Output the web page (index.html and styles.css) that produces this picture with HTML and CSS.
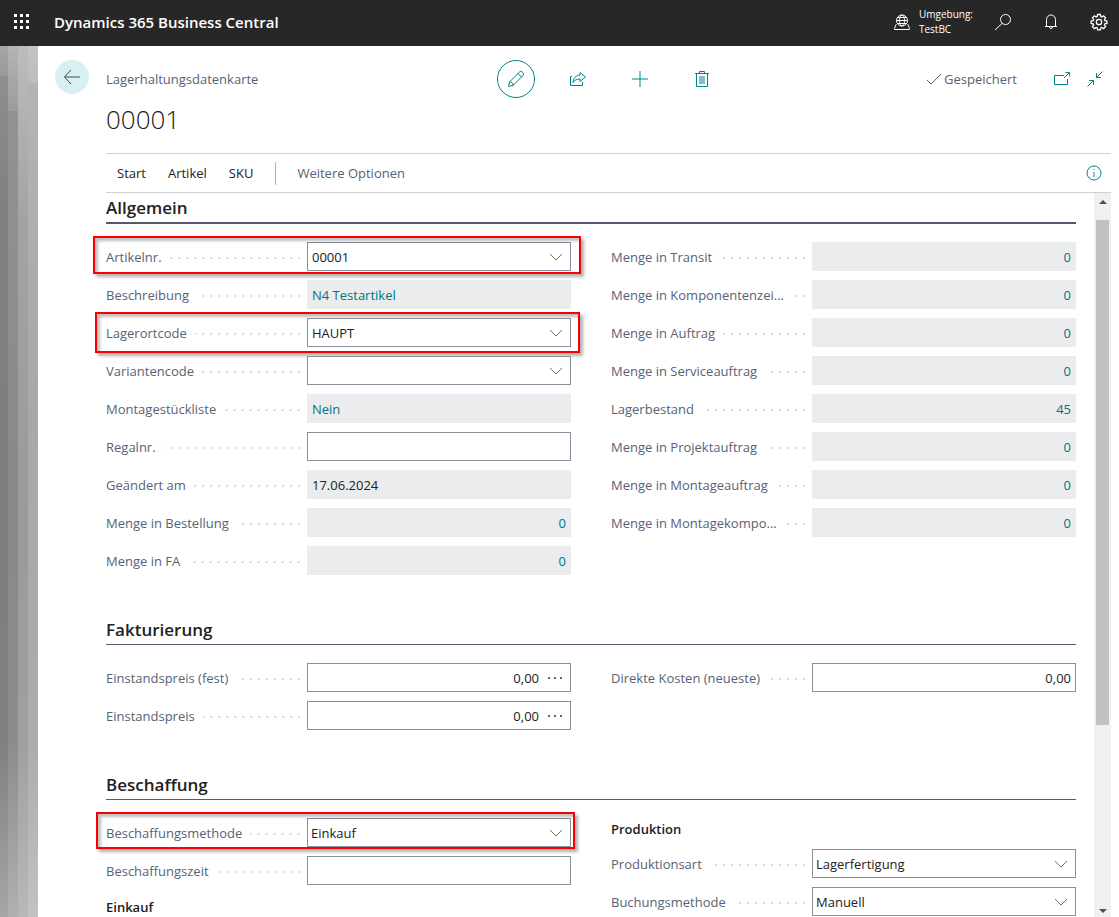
FILE: index.html
```html
<!DOCTYPE html>
<html lang="de">
<head>
<meta charset="utf-8">
<meta name="viewport" content="width=device-width, initial-scale=1">
<title>Lagerhaltungsdatenkarte - 00001</title>
<link rel="stylesheet" href="styles.css">
</head>
<body>
<svg class="sprite" aria-hidden="true">
  <symbol id="chevron" viewBox="0 0 14 8"><path d="M1 1l6 6 6-6"/></symbol>
  <symbol id="more" viewBox="0 0 16 4"><circle cx="2" cy="2" r="1"/><circle cx="8" cy="2" r="1"/><circle cx="14" cy="2" r="1"/></symbol>
</svg>

<header class="topbar">
  <button class="icon-btn" aria-label="App-Startfeld">
    <svg class="waffle" width="16" height="16" viewBox="0 0 16 16"><path d="M0 0h3v3H0zM6 0h3v3H6zM12 0h3v3h-3zM0 6h3v3H0zM6 6h3v3H6zM12 6h3v3h-3zM0 12h3v3H0zM6 12h3v3H6zM12 12h3v3h-3z"/></svg>
  </button>
  <a class="brand" href="#">Dynamics 365 Business Central</a>
  <div class="env">
    <svg width="16" height="16" viewBox="0 0 16 16"><circle cx="8" cy="6.500" r="5.500"/><ellipse cx="8" cy="6.500" rx="2.500" ry="5.500"/><path d="M2.500 6.500h11M3.500 3.500h9M3.500 9.500h9M2.500 10.500H2L.5 14.500v1h15v-1L14 10.500h-.5"/></svg>
    <span>Umgebung:<br>TestBC</span>
  </div>
  <button class="icon-btn" aria-label="Suchen"><svg width="18" height="18" viewBox="0 0 18 18"><circle cx="11.500" cy="6.500" r="5"/><path d="M8 10.500L1 17"/></svg></button>
  <button class="icon-btn" aria-label="Benachrichtigungen"><svg width="16" height="18" viewBox="0 0 16 18"><path d="M2 13.500h12M3.500 13.500V6.500a4.500 4.500 0 0 1 9 0v7M6.500 14a1.500 1.500 0 0 0 3 0"/></svg></button>
  <button class="icon-btn" aria-label="Einstellungen"><svg class="gear" width="18" height="18" viewBox="0 0 18 18"><path d="M7.600 1.500h2.800l.4 2 1.100.5 1.700-1.200 2 2-1.200 1.700.5 1.100 2 .4v2.400l-2 .4-.5 1.100 1.200 1.700-2 2-1.700-1.200-1.100.5-.4 2H7.600l-.4-2-1.100-.5-1.700 1.200-2-2 1.200-1.700-.5-1.100-2-.4V8l2-.4.5-1.100-1.200-1.700 2-2L6.100 4l1.100-.5z"/><circle cx="9" cy="9" r="2.700"/></svg></button>
</header>

<div class="stage">
  <div class="rail" aria-hidden="true"><i></i><i></i><i></i><i></i></div>
  <main class="page">
    <div class="page-head">
      <button class="back" aria-label="Zurück"><svg width="18" height="16" viewBox="0 0 18 16"><path d="M17 8H1.500M8 1L1.500 8 8 15"/></svg></button>
      <div class="caption">Lagerhaltungsdatenkarte</div>
      <div class="tools">
        <button class="tool ring" aria-label="Bearbeiten"><svg width="18" height="18" viewBox="0 0 18 18"><path d="M1.500 16.500l1.200-4.700L12.500 2a1.800 1.800 0 0 1 2.700 0l.8.800a1.800 1.800 0 0 1 0 2.700L6.200 15.300zM2.700 11.800c1.900 0 3.500 1.600 3.500 3.500M11 3.500L14.500 7"/></svg></button>
        <button class="tool" aria-label="Teilen"><svg width="18" height="16" viewBox="0 0 18 16"><path d="M3 5.500H1.500v9h12V11M11 1.500L16.500 6 11 10.500V8C8 8 5.500 9 4 11.500 4.300 7 7 4.300 11 4.200z"/></svg></button>
        <button class="tool" aria-label="Neu"><svg width="18" height="18" viewBox="0 0 18 18"><path d="M9 1v16M1 9h16"/></svg></button>
        <button class="tool" aria-label="Löschen"><svg width="16" height="18" viewBox="0 0 16 18"><path d="M1 3.500h14M5.500 3.500v-2h5v2M2.500 3.500v13h11v-13"/><path class="fill" d="M5 6h6v8H5z"/></svg></button>
      </div>
      <div class="status">
        <span class="saved"><svg width="16" height="12" viewBox="0 0 16 12"><path d="M1 7l4 4L15 1"/></svg>Gespeichert</span>
        <button class="mini" aria-label="In neuem Fenster öffnen"><svg width="16" height="14" viewBox="0 0 16 14"><path d="M10 3.500H.5v9h13V7M10 6l5-5M11.500.5h4v4"/></svg></button>
        <button class="mini" aria-label="Verkleinern"><svg width="16" height="16" viewBox="0 0 16 16"><path d="M.5 15.500L6.500 9.500M2 9.500h4.500V14M15.500.5l-6 6M9.500 2v4.500H14"/></svg></button>
      </div>
    </div>
    <h1>00001</h1>
    <nav class="actions">
      <button>Start</button><button>Artikel</button><button>SKU</button>
      <button class="extra">Weitere Optionen</button>
      <button class="info" aria-label="Infobox"><svg width="16" height="16" viewBox="0 0 16 16"><circle cx="8" cy="8" r="7"/><path d="M8 7v5M8 4v1"/></svg></button>
    </nav>

    <div class="body">
      <div class="content">
        <section>
          <h2>Allgemein</h2>
          <div class="cols">
            <div class="col">
              <div class="row mark mark-a"><label for="f1">Artikelnr.</label><div class="box"><input id="f1" value="00001"><button aria-label="Artikelnr. auswählen"><svg class="chev"><use href="#chevron"/></svg></button></div></div>
              <div class="row"><label for="f2">Beschreibung</label><div class="box ro"><input id="f2" value="N4 Testartikel" readonly></div></div>
              <div class="row mark mark-b"><label for="f3">Lagerortcode</label><div class="box"><input id="f3" value="HAUPT"><button aria-label="Lagerortcode auswählen"><svg class="chev"><use href="#chevron"/></svg></button></div></div>
              <div class="row"><label for="f4">Variantencode</label><div class="box"><input id="f4"><button aria-label="Variantencode auswählen"><svg class="chev"><use href="#chevron"/></svg></button></div></div>
              <div class="row"><label for="f5">Montagestückliste</label><div class="box ro"><input id="f5" value="Nein" readonly></div></div>
              <div class="row"><label for="f6">Regalnr.</label><div class="box"><input id="f6"></div></div>
              <div class="row"><label for="f7">Geändert am</label><div class="box ro plain"><input id="f7" value="17.06.2024" readonly></div></div>
              <div class="row"><label for="f8">Menge in Bestellung</label><div class="box ro num"><input id="f8" value="0" readonly></div></div>
              <div class="row"><label for="f9">Menge in FA</label><div class="box ro num"><input id="f9" value="0" readonly></div></div>
            </div>
            <div class="col">
              <div class="row"><label for="g1">Menge in Transit</label><div class="box ro num"><input id="g1" value="0" readonly></div></div>
              <div class="row"><label for="g2">Menge in Komponentenzei...</label><div class="box ro num"><input id="g2" value="0" readonly></div></div>
              <div class="row"><label for="g3">Menge in Auftrag</label><div class="box ro num"><input id="g3" value="0" readonly></div></div>
              <div class="row"><label for="g4">Menge in Serviceauftrag</label><div class="box ro num"><input id="g4" value="0" readonly></div></div>
              <div class="row"><label for="g5">Lagerbestand</label><div class="box ro num"><input id="g5" value="45" readonly></div></div>
              <div class="row"><label for="g6">Menge in Projektauftrag</label><div class="box ro num"><input id="g6" value="0" readonly></div></div>
              <div class="row"><label for="g7">Menge in Montageauftrag</label><div class="box ro num"><input id="g7" value="0" readonly></div></div>
              <div class="row"><label for="g8">Menge in Montagekompo...</label><div class="box ro num"><input id="g8" value="0" readonly></div></div>
            </div>
          </div>
        </section>

        <section>
          <h2>Fakturierung</h2>
          <div class="cols">
            <div class="col">
              <div class="row"><label for="h1">Einstandspreis (fest)</label><div class="box num"><input id="h1" value="0,00"><button aria-label="Einstandspreis (fest) bearbeiten"><svg class="dots"><use href="#more"/></svg></button></div></div>
              <div class="row"><label for="h2">Einstandspreis</label><div class="box num"><input id="h2" value="0,00"><button aria-label="Einstandspreis bearbeiten"><svg class="dots"><use href="#more"/></svg></button></div></div>
            </div>
            <div class="col">
              <div class="row"><label for="h3">Direkte Kosten (neueste)</label><div class="box num"><input id="h3" value="0,00"></div></div>
            </div>
          </div>
        </section>

        <section>
          <h2>Beschaffung</h2>
          <div class="cols">
            <div class="col">
              <div class="row mark mark-c"><label for="k1">Beschaffungsmethode</label><div class="box pick"><select id="k1"><option>Einkauf</option></select><svg class="chev"><use href="#chevron"/></svg></div></div>
              <div class="row"><label for="k2">Beschaffungszeit</label><div class="box"><input id="k2"></div></div>
              <h3>Einkauf</h3>
            </div>
            <div class="col">
              <h3>Produktion</h3>
              <div class="row"><label for="k3">Produktionsart</label><div class="box pick"><select id="k3"><option>Lagerfertigung</option></select><svg class="chev"><use href="#chevron"/></svg></div></div>
              <div class="row"><label for="k4">Buchungsmethode</label><div class="box pick"><select id="k4"><option>Manuell</option></select><svg class="chev"><use href="#chevron"/></svg></div></div>
            </div>
          </div>
        </section>
      </div>
      <div class="scrollbar" aria-hidden="true">
        <svg width="8" height="4" viewBox="0 0 8 4"><path d="M4 0l4 4H0z"/></svg>
        <div class="track"><div class="thumb"></div></div>
        <svg width="8" height="4" viewBox="0 0 8 4"><path d="M4 4l4-4H0z"/></svg>
      </div>
    </div>
  </main>
</div>
</body>
</html>
```
FILE: styles.css
```css
:root {
  --teal: #00838a;
  --label: #586275;
  --ink: #212121;
  --line: #8a909c;
}

* { box-sizing: border-box; }

body {
  margin: 0;
  height: 100vh;
  display: flex;
  flex-direction: column;
  overflow: hidden;
  background: #fff;
  color: var(--ink);
  font: 13px/20px "Open Sans", "Noto Sans", sans-serif;
}

button, input, select { font: inherit; color: inherit; }
button { border: 0; padding: 0; background: none; cursor: pointer; }
svg { display: block; flex: none; fill: none; stroke: currentColor; }
.sprite { position: absolute; width: 0; height: 0; }

/* Top bar */
.topbar {
  flex: none;
  display: flex;
  align-items: center;
  height: 46px;
  padding: 0 8px 2px 10px;
  background: #272727;
  color: #fff;
}
.icon-btn { display: grid; place-items: center; width: 24px; height: 32px; }
.icon-btn + .icon-btn { margin-left: 24px; }
.waffle { fill: currentColor; stroke: none; }
.gear { stroke-width: 1.3; }
.brand {
  margin: 0 auto 0 20px;
  color: inherit;
  font-size: 15px;
  font-weight: 600;
  text-decoration: none;
}
.env {
  display: flex;
  align-items: center;
  gap: 9px;
  margin-right: 18px;
  font-size: 10px;
  font-weight: 500;
  line-height: 15px;
}

/* Page frame */
.stage { flex: 1; min-height: 0; display: flex; }
.rail { flex: none; display: flex; width: 38px; }
.rail i { width: 10px; background: linear-gradient(#b4b4b4, #9c9c9c 65px, #929292 65px, #888988 50%, #8c8c8c 80%, #b0b0b0); }
.rail i:first-child { width: 8px; background: linear-gradient(#a6a6a6, #9a9a9a 30px, #8e8e8e 30px, #808180 18%, #7c7f7d 55%, #808080 80%, #a6a6a6); }
.rail i:nth-child(3) { background: linear-gradient(#bcbcbc, #a3a3a3 20%, #9a9a9a 55%, #a0a0a0 80%, #b8b8b8); }
.rail i:nth-child(4) { background: linear-gradient(#c4c4c4, #bcbcbc 37px, #b4b4b4 37px, #a8a8a8 40%, #acacac 80%, #c2c2c2); }
.page {
  flex: 1;
  min-width: 0;
  display: flex;
  flex-direction: column;
  padding: 14px 8px 0 17px;
}
.page-head {
  display: grid;
  grid-template-columns: 51px 1fr auto 1fr;
  align-items: center;
  height: 38px;
}
.back {
  display: grid;
  place-items: center;
  width: 34px;
  height: 34px;
  margin-bottom: 4px;
  border-radius: 50%;
  background: #d8f0f2;
  color: #444;
}
.caption { color: var(--label); }
.tools { display: flex; gap: 24px; }
.tool {
  display: grid;
  place-items: center;
  width: 38px;
  height: 38px;
  color: var(--teal);
}
.ring { border: 1px solid var(--teal); border-radius: 50%; }
.fill { fill: #80c1c5; stroke: none; }
.status {
  display: flex;
  align-items: center;
  justify-content: flex-end;
  gap: 17px;
  padding-right: 8px;
  color: var(--teal);
}
.saved { display: flex; align-items: center; gap: 2px; margin-right: 20px; color: var(--label); }

h1 {
  margin: 0 0 12px 51px;
  font-size: 26px;
  line-height: 43px;
  font-weight: 300;
}

.actions {
  flex: none;
  display: flex;
  align-items: center;
  gap: 22px;
  height: 40px;
  margin-left: 51px;
  padding: 0 9px 0 11px;
  border: solid #cfd0d3;
  border-width: 1px 0;
}
.extra { height: 23px; padding-left: 21px; border-left: 1px solid #b0b3ba; color: var(--label); }
.info { margin-left: auto; color: var(--teal); }

.body { flex: 1; min-height: 0; display: flex; }
.content { flex: 1; min-width: 0; overflow: hidden; padding: 0 18px 0 51px; }

/* Sections */
section { margin-bottom: 30px; }
h2 {
  margin: 0 0 18px;
  padding-top: 11px;
  border-bottom: 1px solid #505c6d;
  font-size: 17px;
  line-height: 28px;
  font-weight: 600;
}
section:first-child h2 { padding-top: 1px; border-bottom-width: 2px; }
h3 { margin: 0; font-size: 13px; line-height: 22px; font-weight: 600; }
.row + h3 { line-height: 26px; }
.cols { display: grid; grid-template-columns: 1fr 1fr; gap: 40px; }
.col { display: flex; flex-direction: column; gap: 9px; min-width: 0; }

.row {
  position: relative;
  display: grid;
  grid-template-columns: 201fr 264fr;
  height: 29px;
}
.row label {
  display: flex;
  align-items: center;
  gap: 8px;
  padding-right: 7px;
  color: var(--label);
  white-space: nowrap;
}
.row label::after {
  content: "";
  flex: 1;
  height: 2px;
  margin-top: 3px;
  background: linear-gradient(90deg, transparent 6px, #d6d8db 6px) right / 8px 2px;
}

.box { display: flex; min-width: 0; border: 1px solid var(--line); background: #fff; }
.box input, .box select {
  flex: 1;
  width: 100%;
  min-width: 0;
  padding: 0 4px;
  border: 0;
  background: none;
  appearance: none;
  outline: 0;
}
.box button { display: grid; place-items: center; width: 28px; }
.ro { border-color: #ebecee; background: #ebecee; color: #00747f; }
.plain { color: var(--ink); }
.num input { text-align: right; }
.num button { width: 31px; margin-left: -4px; }
.pick { display: grid; align-items: center; }
.pick select { grid-area: 1 / 1; align-self: stretch; padding: 0 3px; }
.pick svg { grid-area: 1 / 1; justify-self: end; margin-right: 7px; pointer-events: none; }
.chev { width: 14px; height: 8px; color: #7c6a66; }
.dots { width: 16px; height: 4px; fill: #333; stroke: none; }

/* Red callouts drawn over highlighted rows */
.mark::after {
  content: "";
  position: absolute;
  inset: -6px -10px -3px -13px;
  border: 2px solid #f80000;
  box-shadow: 3px 3px 3px rgba(0, 0, 0, .3), inset 3px 3px 3px rgba(0, 0, 0, .25);
  pointer-events: none;
}
.mark-b::after { inset: -6px -9px -6px -11px; }
.mark-c::after { inset: -6px -4px -2px -10px; }

/* Scroll bar */
.scrollbar {
  flex: none;
  display: flex;
  flex-direction: column;
  align-items: center;
  width: 17px;
  padding: 7px 0 4px;
  background: #f0f0f0;
}
.scrollbar svg { fill: #505050; stroke: none; }
.track { flex: 1; width: 13px; padding: 16px 0; }
.thumb { height: 75%; background: #c1c1c1; }
```
